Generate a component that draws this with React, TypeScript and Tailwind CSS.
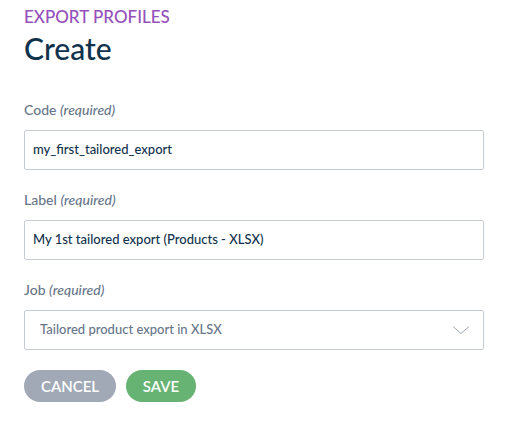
export default function App() {
  return (
    <div className="min-h-screen bg-white px-6 pt-[7px] font-['Lato',sans-serif]">
      <div className="text-[17px] leading-[20px] text-[#9452ba] font-medium uppercase">Export profiles</div>
      <h1 className="mt-[2px] text-[30px] leading-[38px] text-[#11324d] font-medium">Create</h1>

      <div className="mt-[34px] w-[460px] flex flex-col">
        <label className="text-[14px] leading-[18px] text-[#67768a] font-medium">
          Code <em className="italic">(required)</em>
        </label>
        <div className="mt-[11px] h-[40px] flex items-center rounded-[2px] border border-[#c7cbd4] px-[8px] text-[13px] font-medium text-[#11324d]">
          my_first_tailored_export
        </div>

        <label className="mt-[21px] text-[14px] leading-[18px] text-[#67768a] font-medium">
          Label <em className="italic">(required)</em>
        </label>
        <div className="mt-[11px] h-[40px] flex items-center rounded-[2px] border border-[#c7cbd4] px-[8px] text-[13px] font-medium text-[#11324d]">
          My 1st tailored export (Products - XLSX)
        </div>

        <label className="mt-[21px] text-[14px] leading-[18px] text-[#67768a] font-medium">
          Job <em className="italic">(required)</em>
        </label>
        <div className="mt-[11px] h-[40px] flex items-center justify-between rounded-[2px] border border-[#c7cbd4] pl-[15px] pr-[13px] text-[13px] font-medium text-[#67768a]">
          <span>Tailored product export in XLSX</span>
          <svg width="18" height="10" viewBox="0 0 18 10" fill="none">
            <path d="M1 1.5 9 8.5 17 1.5" stroke="#a1a9b7" strokeWidth="1" />
          </svg>
        </div>

        <div className="mt-[20px] flex gap-[10px]">
          <button className="h-[32px] w-[92px] rounded-full bg-[#a1a9b7] text-[15px] font-semibold text-white uppercase">Cancel</button>
          <button className="h-[32px] w-[70px] rounded-full bg-[#67b373] text-[15px] font-semibold text-white uppercase">Save</button>
        </div>
      </div>
    </div>
  );
}
